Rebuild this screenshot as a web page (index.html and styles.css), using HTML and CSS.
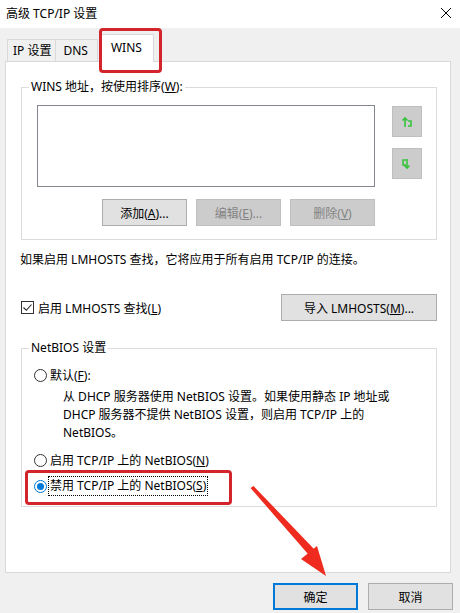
FILE: index.html
```html
<!DOCTYPE html>
<html lang="zh-CN">
<head>
  <meta charset="UTF-8" />
  <title>高级 TCP/IP 设置</title>
  <link rel="stylesheet" href="styles.css">
</head>
<body>
  <div class="window">
    <div class="titlebar">
      <span class="title">高级 TCP/IP 设置</span>
      <svg class="close" width="12" height="12" viewBox="0 0 12 12">
        <path d="M1 1 L11 11 M11 1 L1 11" stroke="#000" stroke-width="1" fill="none" />
      </svg>
    </div>

    <div class="content">
      <div class="tabs">
        <div class="tab">IP 设置</div>
        <div class="tab">DNS</div>
        <div class="tab active">WINS<span class="mark mark-tab"></span></div>
      </div>

      <div class="panel">
        <fieldset class="group wins">
          <legend>WINS 地址，按使用排序(<u>W</u>):</legend>
          <div class="list-row">
            <div class="listbox"></div>
            <div class="updown">
              <div class="arrow-btn">
                <svg width="12" height="14" viewBox="0 0 12 14">
                  <path d="M4 12 V3 M1.5 5.5 L4 3 L6.5 5.5 M7 6 H10 V11 H7" stroke="#39c33d" stroke-width="1.6" fill="none" />
                </svg>
              </div>
              <div class="arrow-btn">
                <svg width="12" height="14" viewBox="0 0 12 14">
                  <path d="M6 2 V11 M3.5 8.5 L6 11 L8.5 8.5 M5 3 H2 V8 H5" stroke="#39c33d" stroke-width="1.6" fill="none" />
                </svg>
              </div>
            </div>
          </div>
          <div class="btn-row">
            <button class="btn">添加(<u>A</u>)...</button>
            <button class="btn" disabled>编辑(<u>E</u>)...</button>
            <button class="btn" disabled>删除(<u>V</u>)</button>
          </div>
        </fieldset>

        <p class="note">如果启用 LMHOSTS 查找，它将应用于所有启用 TCP/IP 的连接。</p>

        <div class="lm-row">
          <label class="check">
            <span class="checkbox">
              <svg width="11" height="11" viewBox="0 0 11 11">
                <path d="M1.5 5.5 L4.3 8.3 L9.5 2.5" stroke="#222" stroke-width="1.1" fill="none" />
              </svg>
            </span>
            <span>启用 LMHOSTS 查找(<u>L</u>)</span>
          </label>
          <button class="btn btn-wide">导入 LMHOSTS(<u>M</u>)...</button>
        </div>

        <fieldset class="group netbios">
          <legend>NetBIOS 设置</legend>
          <label class="radio-row">
            <span class="radio"></span><span>默认(<u>F</u>):</span>
          </label>
          <p class="desc">从 DHCP 服务器使用 NetBIOS 设置。如果使用静态 IP 地址或 DHCP 服务器不提供 NetBIOS 设置，则启用 TCP/IP 上的 NetBIOS。</p>
          <label class="radio-row gap">
            <span class="radio"></span><span>启用 TCP/IP 上的 NetBIOS(<u>N</u>)</span>
          </label>
          <label class="radio-row gap selected">
            <span class="radio on"></span><span class="focus">禁用 TCP/IP 上的 NetBIOS(<u>S</u>)</span>
            <span class="mark mark-radio"></span>
          </label>
        </fieldset>
      </div>

      <div class="footer">
        <button class="btn btn-default">确定</button>
        <button class="btn">取消</button>
      </div>
    </div>

    <svg class="pointer" width="460" height="613" viewBox="0 0 460 613">
      <polygon points="250.5,488 253.5,486 314,549 308,554" fill="#ee2b1e" />
      <polygon points="326,576 301,559 317,546" fill="#ee2b1e" />
    </svg>
  </div>
</body>
</html>
```

FILE: styles.css
```css
body {
  margin: 0;
  font-family: "Noto Sans", "Noto Sans CJK SC", sans-serif;
  font-size: 12px;
  color: #000;
}
.window {
  position: relative;
  width: 460px;
  height: 613px;
  background: #f0f0f0;
  overflow: hidden;
}
.titlebar {
  height: 28px;
  background: #fff;
  display: flex;
  align-items: center;
  justify-content: space-between;
  padding: 0 8px 0 6px;
  box-sizing: border-box;
}
.title { line-height: 14px; }
.close { margin-top: -2px; }

.content {
  padding: 0 9px 0 5px;
}
.tabs {
  display: flex;
  align-items: flex-end;
  height: 33px;
  padding-left: 2px;
}
.tab {
  height: 22px;
  line-height: 21px;
  padding: 0 9px 0 7px;
  border: 1px solid #d9d9d9;
  border-bottom: none;
  box-sizing: border-box;
  margin-right: -1px;
}
.tab:first-child { padding: 0 4px 0 5px; }
.tab.active {
  position: relative;
  z-index: 1;
  height: 28px;
  line-height: 26px;
  margin: 0 0 -1px 4px;
  padding: 0 11px 0 9px;
  background: #fff;
}

.mark {
  position: absolute;
  border: 3px solid #d3232b;
  border-radius: 4px;
  box-sizing: border-box;
  pointer-events: none;
}
.mark-tab {
  left: -3px;
  top: -7px;
  width: 63px;
  height: 45px;
}

.panel {
  height: 512px;
  box-sizing: border-box;
  background: #fff;
  border: 1px solid #d9d9d9;
  padding: 18px 13px 0 15px;
}
.group {
  margin: 0;
  border: 1px solid #dcdcdc;
  min-width: 0;
}
.group legend {
  padding: 0 2px;
  line-height: 14px;
}
.wins {
  padding: 11px 0 13px 15px;
}
.wins legend { margin-left: -8px; }
.list-row {
  display: flex;
  gap: 17px;
}
.listbox {
  width: 338px;
  height: 82px;
  box-sizing: border-box;
  border: 1px solid #828790;
}
.updown {
  display: flex;
  flex-direction: column;
  gap: 11px;
  padding-top: 1px;
}
.arrow-btn {
  width: 30px;
  height: 31px;
  box-sizing: border-box;
  background: #cccccc;
  border: 1px solid #bfbfbf;
  display: flex;
  align-items: center;
  justify-content: center;
}
.btn-row {
  width: 338px;
  display: flex;
  justify-content: flex-end;
  gap: 9px;
  margin-top: 12px;
}
.btn {
  width: 85px;
  height: 27px;
  padding: 0;
  font: inherit;
  color: #000;
  background: #e1e1e1;
  border: 1px solid #adadad;
  box-sizing: border-box;
}
.btn:disabled {
  background: #cccccc;
  border-color: #bfbfbf;
  color: #838383;
}
.btn-wide { width: 156px; }
.btn-default {
  border: 2px solid #0078d7;
}

.note {
  margin: 13px 0 0 -1px;
  line-height: 14px;
}
.lm-row {
  display: flex;
  align-items: center;
  justify-content: space-between;
  margin-top: 27px;
}
.check {
  display: flex;
  align-items: center;
  gap: 4px;
}
.checkbox {
  width: 13px;
  height: 13px;
  box-sizing: border-box;
  border: 1px solid #333;
  display: flex;
  align-items: center;
  justify-content: center;
}

.netbios {
  margin-top: 20px;
  padding: 12px 0 12px 12px;
}
.netbios legend { margin-left: -5px; }
.radio-row {
  position: relative;
  display: flex;
  align-items: center;
  height: 16px;
  gap: 3px;
}
.radio-row.gap { margin-top: 10px; }
.radio {
  width: 13px;
  height: 13px;
  box-sizing: border-box;
  border: 1px solid #333;
  border-radius: 50%;
  display: flex;
  align-items: center;
  justify-content: center;
}
.radio.on { border-color: #0078d7; }
.radio.on::after {
  content: "";
  width: 7px;
  height: 7px;
  border-radius: 50%;
  background: #0078d7;
}
.focus {
  outline: 1px dotted #000;
  outline-offset: 1px;
  line-height: 16px;
}
.mark-radio {
  left: -9px;
  top: -8px;
  width: 207px;
  height: 35px;
}
.desc {
  margin: 5px 0 0 29px;
  width: 330px;
  line-height: 18px;
}

.footer {
  display: flex;
  justify-content: flex-end;
  gap: 10px;
  padding-top: 10px;
  margin-right: -2px;
}

.pointer {
  position: absolute;
  left: 0;
  top: 0;
  pointer-events: none;
}
```
